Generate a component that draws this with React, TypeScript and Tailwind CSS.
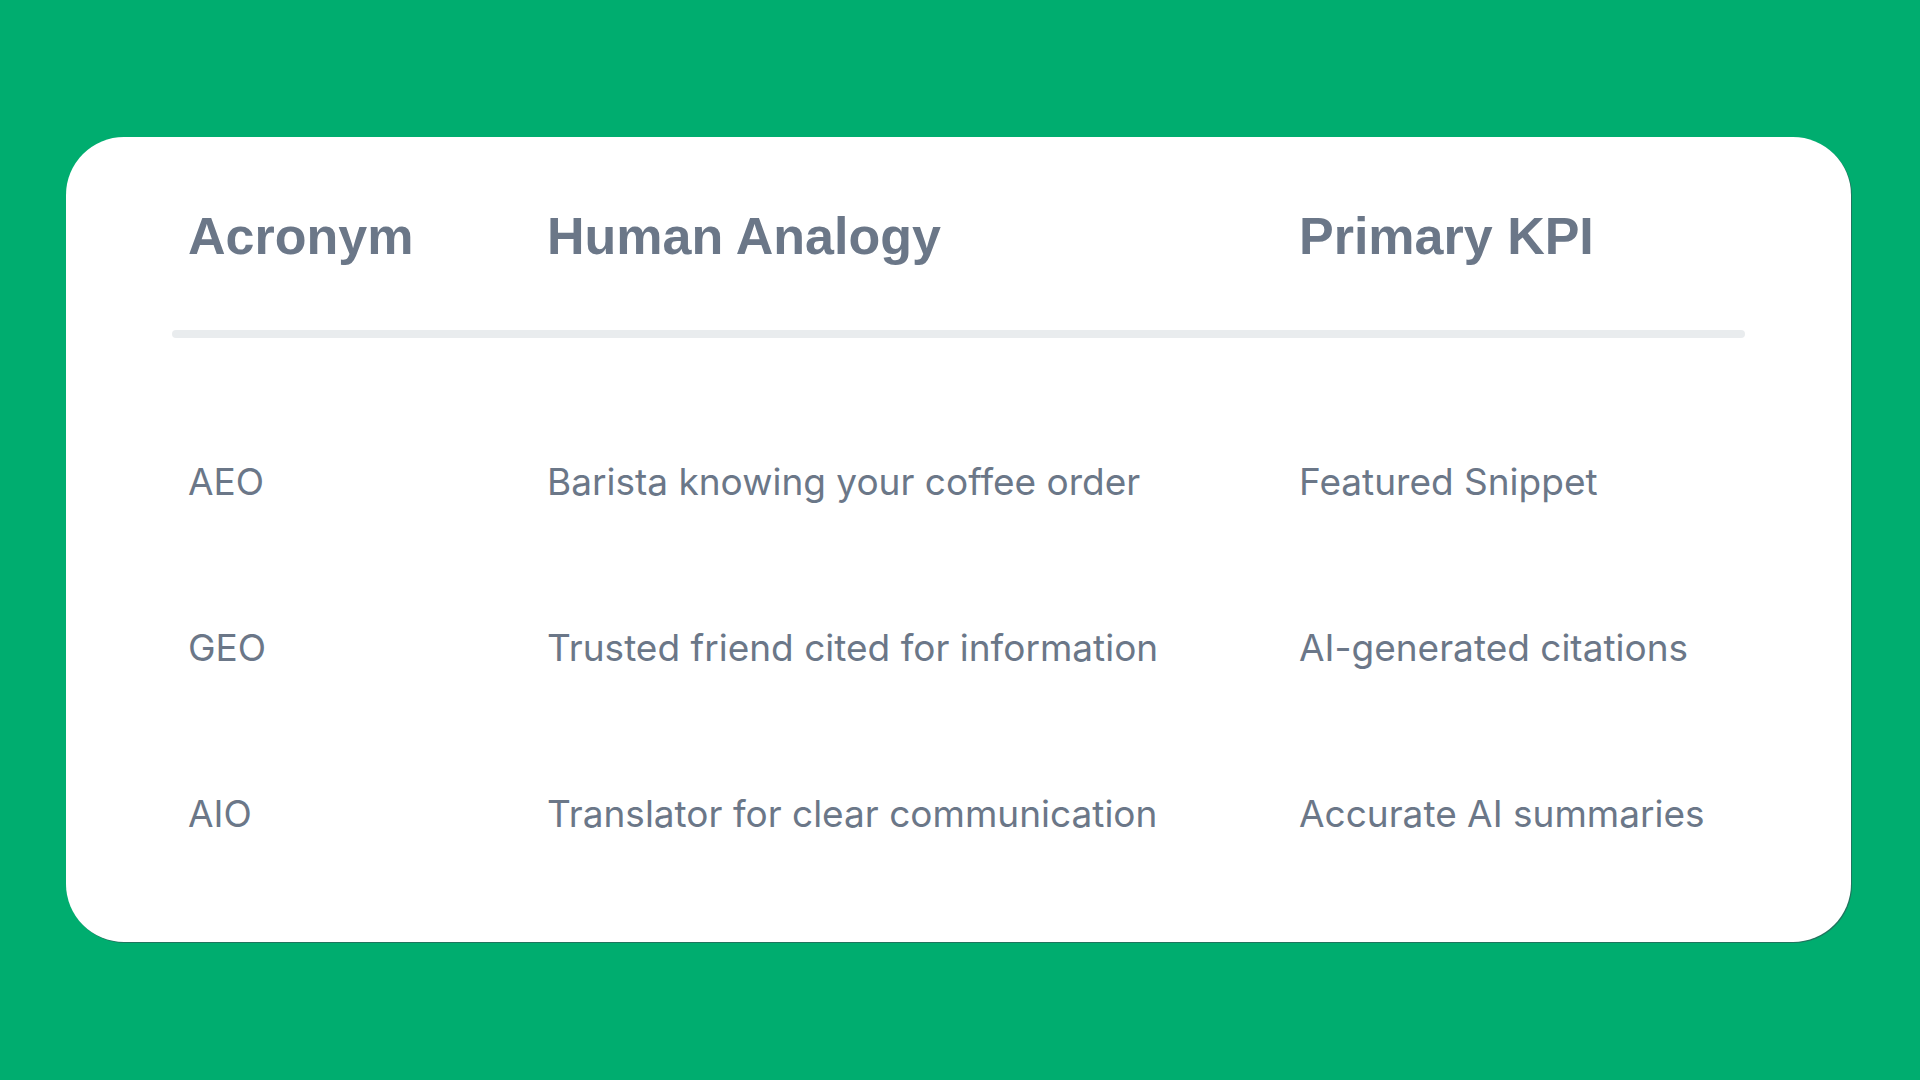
export default function App() {
  const rows = [
    ["AEO", "Barista knowing your coffee order", "Featured Snippet"],
    ["GEO", "Trusted friend cited for information", "AI-generated citations"],
    ["AIO", "Translator for clear communication", "Accurate AI summaries"],
  ];

  return (
    <div className="w-[1920px] h-[1080px] bg-[#00ad6f] pt-[137px] pl-[66px] font-['Liberation_Sans',Arial,sans-serif]">
      <div className="w-[1785px] h-[805px] bg-white rounded-[58px] px-[106px] pt-[50px] shadow-[1px_1px_0_rgba(60,70,80,0.55)]">
        {/* Header */}
        <div className="grid grid-cols-[359px_752px_1fr] h-[98px] items-center text-[52px] font-bold text-[#6b7788]">
          <div className="pl-4">Acronym</div>
          <div className="pl-4">Human Analogy</div>
          <div className="pl-4">Primary KPI</div>
        </div>
        <div className="mt-[45px] h-2 rounded-full bg-[#e9ecee]" />

        {/* Rows */}
        <div className="pt-[61px]">
          {rows.map((r) => (
            <div
              key={r[0]}
              className="grid grid-cols-[359px_752px_1fr] h-[166px] items-center font-['Inter',sans-serif] text-[37px] text-[#6b7788]"
            >
              <div className="pl-4">{r[0]}</div>
              <div className="pl-4">{r[1]}</div>
              <div className="pl-4">{r[2]}</div>
            </div>
          ))}
        </div>
      </div>
    </div>
  );
}
